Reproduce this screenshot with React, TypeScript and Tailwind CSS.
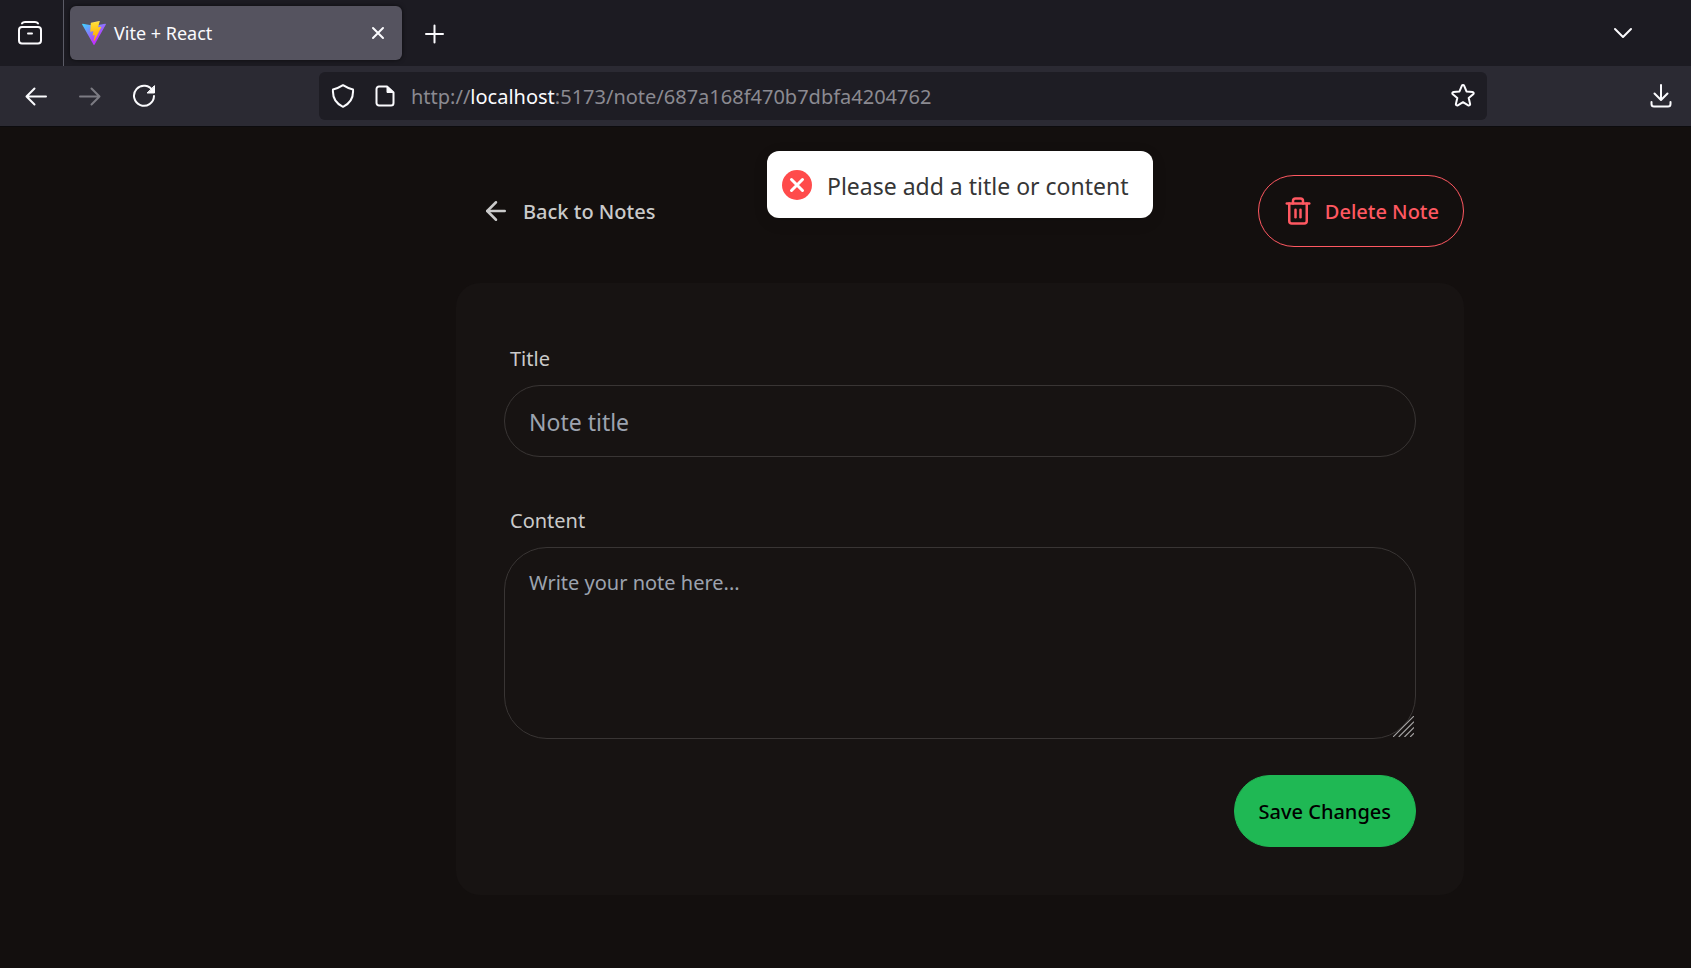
import type { ReactNode } from "react";
import { ArrowLeft, Trash2 } from "lucide-react";

function Glyph({ children, className = "" }: { children: ReactNode; className?: string }) {
  return (
    <svg
      viewBox="0 0 24 24"
      fill="none"
      stroke="currentColor"
      strokeWidth="2"
      strokeLinecap="round"
      strokeLinejoin="round"
      aria-hidden="true"
      className={`size-6 shrink-0 ${className}`}
    >
      {children}
    </svg>
  );
}

function ViteLogo() {
  return (
    <svg viewBox="0 0 256 257" className="size-6 shrink-0" aria-hidden="true">
      <defs>
        <linearGradient id="vite-body" x1="-.828%" x2="57.636%" y1="7.652%" y2="78.411%">
          <stop offset="0%" stopColor="#41D1FF" />
          <stop offset="100%" stopColor="#BD34FE" />
        </linearGradient>
        <linearGradient id="vite-bolt" x1="43.376%" x2="50.316%" y1="2.242%" y2="89.03%">
          <stop offset="0%" stopColor="#FFEA83" />
          <stop offset="8.333%" stopColor="#FFDD35" />
          <stop offset="100%" stopColor="#FFA800" />
        </linearGradient>
      </defs>
      <path
        fill="url(#vite-body)"
        d="M255.153 37.938L134.897 252.976c-2.483 4.44-8.862 4.466-11.382.048L.875 37.958c-2.746-4.814 1.371-10.646 6.827-9.67l120.385 21.517a6.537 6.537 0 0 0 2.322-.004l117.867-21.483c5.438-.991 9.574 4.796 6.877 9.62Z"
      />
      <path
        fill="url(#vite-bolt)"
        d="M185.432.063L96.44 17.501a3.268 3.268 0 0 0-2.634 3.014l-5.474 92.456a3.268 3.268 0 0 0 3.997 3.378l24.777-5.718c2.318-.535 4.413 1.507 3.936 3.838l-7.361 36.047c-.495 2.426 1.782 4.5 4.151 3.78l15.304-4.649c2.372-.72 4.652 1.36 4.15 3.788l-11.698 56.621c-.732 3.542 3.979 5.473 5.943 2.437l1.313-2.028l72.516-144.72c1.215-2.423-.88-5.186-3.54-4.672l-25.505 4.922c-2.396.462-4.435-1.77-3.759-4.114l16.646-57.705c.677-2.35-1.37-4.583-3.769-4.113Z"
      />
    </svg>
  );
}

function TabStrip() {
  return (
    <div className="flex h-[66px] items-center bg-[#1c1b22]">
      <div className="flex h-full w-16 items-center justify-between border-r border-[#5b5b66] pl-[18px]">
        <button type="button" aria-label="Recent browsing">
          <Glyph>
            <path d="M4 2.4C4.700 1.400 5.700 1 7 1h10c1.300 0 2.300.4 3 1.400" />
            <rect x="1" y="6" width="22" height="16.500" rx="3" />
            <path d="M10 12.500h4" />
          </Glyph>
        </button>
      </div>
      <div className="ml-1.5 flex h-[54px] w-[332px] items-center rounded-md bg-[#55535f] pr-3 pl-3 shadow-[0_0_4px_rgba(0,0,0,0.6)]">
        <ViteLogo />
        <span className="ml-2 flex-1 text-[18px] leading-6">Vite + React</span>
        <button type="button" aria-label="Close tab">
          <Glyph>
            <path d="M7 7l10 10M17 7L7 17" />
          </Glyph>
        </button>
      </div>
      <button type="button" aria-label="New tab" className="ml-5">
        <Glyph>
          <path d="M12.500 4.500v17M4 13h17" />
        </Glyph>
      </button>
      <button type="button" aria-label="List all tabs" className="mr-14 ml-auto">
        <Glyph>
          <path d="M4 8l8 8 8-8" />
        </Glyph>
      </button>
    </div>
  );
}

function Toolbar() {
  return (
    <div className="flex h-[61px] items-center border-b border-[#0c0b0e] bg-[#2b2a33]">
      <div className="flex w-[319px] shrink-0 items-center gap-[30px] pl-6">
        <button type="button" aria-label="Go back">
          <Glyph>
            <path d="M2.500 12.500H22M10.500 4.500l-8 8 8 8" />
          </Glyph>
        </button>
        <button type="button" aria-label="Go forward" className="text-[#7c7b83]">
          <Glyph>
            <path d="M21.500 12.500H2M13.500 4.500l8 8-8 8" />
          </Glyph>
        </button>
        <button type="button" aria-label="Reload page">
          <Glyph>
            <path d="M20.800 7A10 10 0 1 0 22 12" />
            <path d="M22.500 2v7h-7z" fill="currentColor" strokeWidth="1" />
          </Glyph>
        </button>
      </div>
      <div className="flex h-12 flex-1 items-center rounded-md bg-[#1e1d24] px-3">
        <Glyph>
          <path d="M12 1.200c3 2 6 3.300 10 4.200.6 7.500-2.300 13.800-10 17.400C4.300 19.200 1.400 12.900 2 5.400c4-.9 7-2.200 10-4.200z" />
        </Glyph>
        <Glyph className="ml-[18px]">
          <path d="M14 2.500H6a2.500 2.500 0 0 0-2.500 2.500v14a2.500 2.500 0 0 0 2.500 2.500h12a2.500 2.500 0 0 0 2.500-2.500V8.500z" />
          <path d="M14 2.500v6h6.500z" fill="currentColor" strokeWidth="1" />
        </Glyph>
        <div
          role="textbox"
          aria-label="Address"
          className="ml-3.5 flex-1 pt-0.5 text-[20px] leading-6 text-[#8b8a91]"
        >
          http://<span className="text-[#fbfbfe]">localhost</span>:5173/note/687a168f470b7dbfa4204762
        </div>
        <button type="button" aria-label="Bookmark this page">
          <Glyph>
            <path d="M10.800 1.900a1.300 1.300 0 0 1 2.400 0l2.300 5.500 6 .5a1.300 1.300 0 0 1 .7 2.300l-4.500 3.900 1.400 5.800a1.300 1.300 0 0 1-1.900 1.400L12 18.200l-5.200 3.100a1.300 1.300 0 0 1-1.900-1.400l1.400-5.800-4.500-3.900a1.300 1.300 0 0 1 .7-2.300l6-.5z" />
          </Glyph>
        </button>
      </div>
      <div className="flex w-[204px] shrink-0 justify-end pr-[18px]">
        <button type="button" aria-label="Downloads">
          <Glyph>
            <path d="M12 1v14.500M5.500 9.500l6.500 6.500 6.500-6.500M2.500 18v2a2.500 2.500 0 0 0 2.500 2.500h14a2.500 2.500 0 0 0 2.500-2.500v-2" />
          </Glyph>
        </button>
      </div>
    </div>
  );
}

function Toast() {
  return (
    <div
      role="status"
      className="absolute top-6 left-1/2 flex h-[67px] w-[386px] -translate-x-1/2 items-center rounded-xl bg-white pl-[15px] text-[#363636] shadow-[0_4px_15px_rgba(0,0,0,0.1)]"
    >
      <svg viewBox="0 0 30 30" className="size-[30px] shrink-0" aria-hidden="true">
        <circle cx="15" cy="15" r="15" fill="#ff4b4b" />
        <path d="M9.500 9.500l11 11M20.500 9.500l-11 11" stroke="#fff" strokeWidth="3" strokeLinecap="round" />
      </svg>
      <span className="ml-[15px] pt-0.5 text-[23px] leading-8 whitespace-nowrap">Please add a title or content</span>
    </div>
  );
}

export default function App() {
  return (
    <div className="flex min-h-screen flex-col bg-[#130f0e] font-['Noto_Sans','Open_Sans',sans-serif] text-[#fbfbfe]">
      <header>
        <TabStrip />
        <Toolbar />
      </header>
      <div className="flex-1 pl-[229px]">
        <main className="relative mx-auto max-w-[1008px] pt-12 pb-12">
          <Toast />
          <div className="mb-9 flex items-center justify-between text-[20px] leading-6 font-medium">
            <a href="#notes" className="flex h-[72px] items-center gap-3 px-[25px] text-[#cacaca]">
              <ArrowLeft className="size-[30px]" />
              <span className="pt-0.5">Back to Notes</span>
            </a>
            <button
              type="button"
              className="flex h-[72px] items-center gap-3 rounded-full border border-[#ff5861] px-6 text-[#ff5861]"
            >
              <Trash2 className="size-[30px]" />
              <span className="pt-0.5">Delete Note</span>
            </button>
          </div>
          <form className="rounded-3xl bg-[#171312] p-12">
            <label htmlFor="title" className="block px-1.5 pt-[13px] pb-[11px] text-[20px] leading-[30px] text-[#cacaca]">
              Title
            </label>
            <input
              id="title"
              type="text"
              placeholder="Note title"
              className="block h-[72px] w-full rounded-full border border-[#393534] bg-transparent px-6 pt-0.5 text-[23px] placeholder:text-[#9ca3af]"
            />
            <label
              htmlFor="content"
              className="mt-9 block px-1.5 pt-[13px] pb-[11px] text-[20px] leading-[30px] text-[#cacaca]"
            >
              Content
            </label>
            <div className="relative">
              <textarea
                id="content"
                placeholder="Write your note here..."
                className="block h-48 w-full resize-none rounded-[43px] border border-[#393534] bg-transparent px-6 py-5 text-[20px] leading-[30px] placeholder:text-[#9ca3af]"
              />
              <svg
                viewBox="0 0 22 22"
                className="pointer-events-none absolute right-0.5 bottom-0.5 size-[21px] text-[#a5a3a3]"
                aria-hidden="true"
              >
                <path d="M0 22L22 0M6 22L22 6M12 22L22 12M18 22l4-4" stroke="currentColor" strokeWidth="1.200" />
              </svg>
            </div>
            <div className="mt-9 flex justify-end">
              <button
                type="submit"
                className="h-[72px] rounded-full border border-[#1fb854] bg-[#1fb854] px-6 pt-0.5 text-[20px] leading-6 font-medium text-black"
              >
                Save Changes
              </button>
            </div>
          </form>
        </main>
      </div>
    </div>
  );
}
